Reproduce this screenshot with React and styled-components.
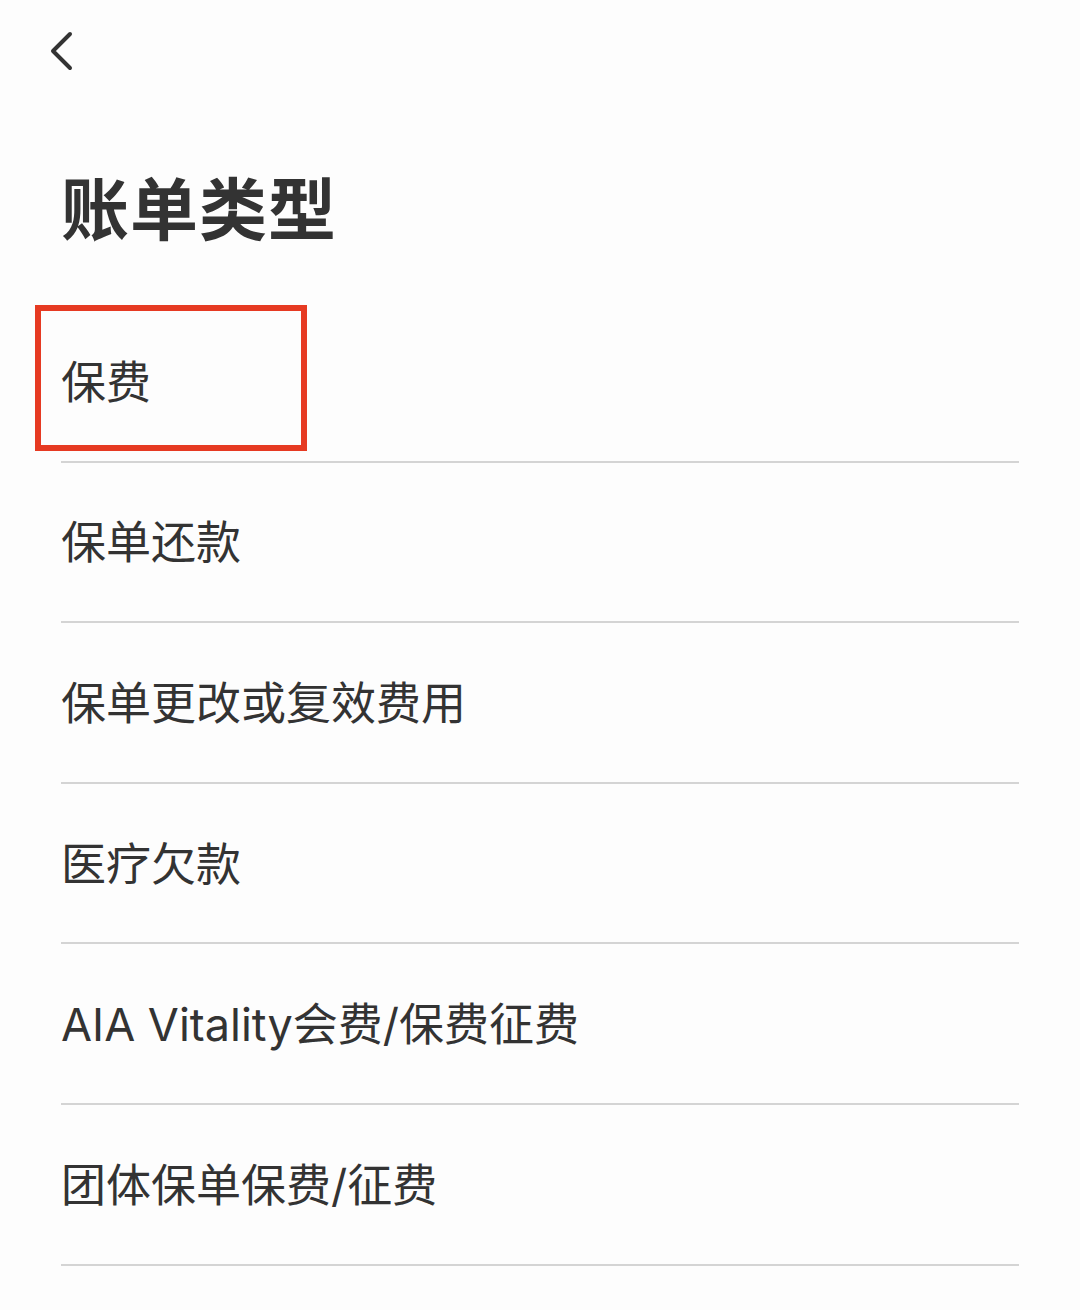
import React from 'react';
import styled, { createGlobalStyle } from 'styled-components';

const GlobalStyle = createGlobalStyle`
	html, body {
		margin: 0;
		padding: 0;
		background: #fdfdfd;
	}
	body {
		font-family: "Noto Sans CJK SC", "Noto Sans", sans-serif;
		color: #333333;
	}
`;

const items = [
	'保费',
	'保单还款',
	'保单更改或复效费用',
	'医疗欠款',
	'AIA Vitality会费/保费征费',
	'团体保单保费/征费',
];

const Page = styled.div`
	width: 1080px;
	min-height: 1310px;
	box-sizing: border-box;
	padding: 0 61px;
	background: #fdfdfd;
`;

const TopBar = styled.div`
	height: 100px;
	display: flex;
	align-items: flex-start;
	padding-top: 30px;
	box-sizing: border-box;
	margin-left: -13px;
`;

const BackButton = styled.button`
	border: none;
	background: none;
	padding: 0;
	width: 30px;
	height: 42px;
	cursor: pointer;
	svg {
		display: block;
	}
`;

const Title = styled.h1`
	margin: 0;
	height: 202px;
	padding-top: 10px;
	box-sizing: border-box;
	display: flex;
	align-items: center;
	font-size: 68px;
	font-weight: 700;
	line-height: 1;
	color: #333333;
	letter-spacing: 1px;
`;

const List = styled.ul`
	list-style: none;
	margin: 0;
	padding: 0;
`;

const Row = styled.li`
	position: relative;
	height: 160.6px;
	box-sizing: border-box;
	display: flex;
	align-items: center;
	padding-bottom: 4px;
	border-bottom: 2px solid #d4d4d4;
	font-family: Inter, "Noto Sans CJK SC", sans-serif;
	font-size: 45px;
	color: #333333;
`;

const Highlight = styled.span`
	position: absolute;
	left: -26px;
	top: 3px;
	width: 272px;
	height: 146px;
	box-sizing: border-box;
	border: 6px solid #e63a22;
	pointer-events: none;
`;

export default function App() {
	return (
		<>
			<GlobalStyle />
			<Page>
				<TopBar>
					<BackButton aria-label="返回">
						<svg width="30" height="42" viewBox="0 0 30 42" fill="none">
							<path d="M22 4 L5 21 L22 38" stroke="#333" strokeWidth="4" strokeLinecap="round" strokeLinejoin="round" />
						</svg>
					</BackButton>
				</TopBar>
				<Title>账单类型</Title>
				<List>
					{items.map((label, i) => (
						<Row key={label}>
							{label}
							{i === 0 && <Highlight />}
						</Row>
					))}
				</List>
			</Page>
		</>
	);
}
